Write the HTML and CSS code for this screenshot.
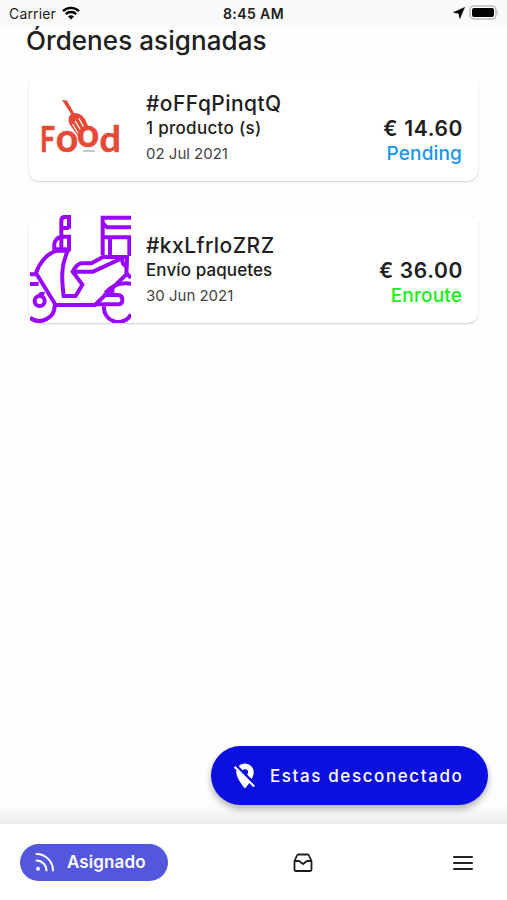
FILE: index.html
```html
<!DOCTYPE html>
<html lang="es">
  <head>
    <meta charset="UTF-8" />
    <meta name="viewport" content="width=device-width, initial-scale=1.0" />
    <title>Órdenes asignadas</title>
    <link rel="stylesheet" href="styles.css">
  </head>
  <body>
    <div class="app">
      <header class="status">
        <div class="carrier">
          <span>Carrier</span>
          <svg width="18" height="14" viewBox="0 0 18 14" fill="none" stroke="#000" stroke-width="2.4">
            <path d="M1 5.2a11.3 11.3 0 0 1 16 0" />
            <path d="M3.8 8.2a7.4 7.4 0 0 1 10.4 0" />
            <path d="M9 13.6L6 10.6a4.3 4.3 0 0 1 6 0z" fill="#000" stroke="none" />
          </svg>
        </div>
        <span class="time">8:45 AM</span>
        <div class="battery">
          <svg width="12" height="12" viewBox="0 0 12 12"><path d="M11.5 .5L6.8 11.5 5.8 6.3.5 5.4z" stroke="#000" stroke-width=".6" /></svg>
          <svg width="31" height="16" viewBox="0 0 31 16">
            <rect x="1" y="1" width="26" height="13" rx="4" fill="#fff" stroke="#bbb" stroke-width="1.5" />
            <rect x="3" y="3" width="22" height="9" rx="2" />
            <path d="M28.4 5.5q2 2 0 4z" fill="#bbb" />
          </svg>
        </div>
      </header>

      <main class="content">
        <h1>Órdenes asignadas</h1>

        <article class="card">
          <svg class="thumb" viewBox="0 0 101 108" fill="#e64a37">
            <path d="M32 27l5 .5L44 40c6 0 9 3 11 6l4 9-11 8-8-11c-2-4-2-8 1-11z" />
            <path d="M45 48l7 11M49 45.500l6 11M42.500 51l6 10" fill="none" stroke="#fff" stroke-width="1.300" />
            <g class="logo-text">
              <text x="10" y="79" font-size="37" textLength="15" lengthAdjust="spacingAndGlyphs">F</text>
              <text x="25.7" y="79" font-size="40" textLength="22.5" lengthAdjust="spacingAndGlyphs">o</text>
              <text x="46.7" y="73.5" font-size="40" textLength="22.5" lengthAdjust="spacingAndGlyphs">o</text>
              <text x="69.5" y="79" font-size="37" textLength="21.5" lengthAdjust="spacingAndGlyphs">d</text>
            </g>
            <path d="M53 78h12" stroke="#b5b5b5" stroke-width="1.500" />
          </svg>
          <div class="info">
            <h2>#oFFqPinqtQ</h2>
            <p class="detail detail-short">1 producto (s)</p>
            <p class="date">02 Jul 2021</p>
          </div>
          <div class="amount">
            <p class="price">€ 14.60</p>
            <p class="state pending">Pending</p>
          </div>
        </article>

        <article class="card">
          <svg class="thumb" viewBox="30 30 303 324" fill="none" stroke="#9807fa" stroke-width="12">
            <!-- handlebar and headlight -->
            <path d="M147 71V36h-13q-10 0-10 11v43M124 69h23M124 95h23v38h-44v-17q4-18 21-21v38" />
            <!-- front fender and leg shield -->
            <path d="M48 204c10-30 32-58 62-67h34c-22 42-19 88-13 136h36l20-34-29-39c8-14 14-24 27-25h29l35-19h78M164 200h55l82-38M48 204l59 96h118l94-92 2-47" />
            <path d="M30 208h18M30 237h26M319 204l14 15M256 264q30-36 77-28" />
            <!-- box -->
            <path d="M333 38h-85v112M248 54l13 13h72M248 97h85M270 97v56M328 97v56M307 157v12q2 14 18 18" />
            <!-- wheels -->
            <path d="M104 300a46 46 0 0 1-74 38M252 304a43 43 0 0 0 81 24" />
            <circle cx="59" cy="288" r="15" />
            <path d="M59 270q4-6 14-3M250 270h43q14 0 14 14t-14 14h-68M277 250v20" />
          </svg>
          <div class="info">
            <h2>#kxLfrloZRZ</h2>
            <p class="detail">Envío paquetes</p>
            <p class="date">30 Jun 2021</p>
          </div>
          <div class="amount">
            <p class="price">€ 36.00</p>
            <p class="state enroute">Enroute</p>
          </div>
        </article>
      </main>

      <div class="action">
        <button class="connect">
          <svg width="30" height="30" viewBox="0 0 24 24" fill="#fff">
            <path d="M12 6.500A2.500 2.500 0 0 1 14.500 9c0 .74-.33 1.390-.83 1.850l3.630 3.630c.98-1.860 1.700-3.800 1.700-5.480a7 7 0 0 0-7-7c-1.980 0-3.760.83-5.040 2.150l3.190 3.190c.46-.52 1.110-.84 1.850-.84zM16.370 16.100L4.270 4l-1.270 1.270 2.180 2.180C5.060 7.950 5 8.470 5 9c0 5.250 7 13 7 13s1.670-1.850 3.380-4.350L18.730 21 20 19.730z" />
          </svg>
          <span>Estas desconectado</span>
        </button>
      </div>

      <nav class="tabs">
        <a class="tab-active" href="#">
          <svg width="20" height="20" viewBox="0 0 20 20" fill="none" stroke="#fff" stroke-width="2" stroke-linecap="round">
            <path d="M1.500 2A16.500 16.500 0 0 1 18 18.500M1.500 8.500a10 10 0 0 1 10 10" />
            <circle cx="3" cy="16.700" r="2" fill="#fff" stroke="none" />
          </svg>
          <span>Asignado</span>
        </a>
        <a class="tab-orders" href="#">
          <svg width="20" height="20" viewBox="0 0 20 20" fill="none" stroke="#1c1c1c" stroke-width="1.800" stroke-linejoin="round">
            <path d="M1.500 8L4 2.500Q4.300 1.500 5.500 1.500h9Q15.700 1.500 16 2.500L18.500 8v8.500q0 1.500-1.500 1.500H3q-1.500 0-1.500-1.500zM1.500 8H6L10 11 14 8h4.500" />
          </svg>
        </a>
        <a class="tab-menu" href="#">
          <svg width="20" height="16" viewBox="0 0 20 16" stroke="#222" stroke-width="2" stroke-linecap="round">
            <path d="M1 2h18M1 8h18M1 14h18" />
          </svg>
        </a>
      </nav>
    </div>
  </body>
</html>
```
FILE: styles.css
```css
* {
  margin: 0;
  padding: 0;
  box-sizing: border-box;
}
body {
  font-family: Inter, "Liberation Sans", sans-serif;
  color: #202020;
  background: #fefefe;
}
a {
  color: inherit;
  text-decoration: none;
}
.app {
  height: 900px;
  display: flex;
  flex-direction: column;
  overflow: hidden;
}
.status {
  height: 26px;
  padding: 0 7px 0 9px;
  display: grid;
  grid-template-columns: 1fr auto 1fr;
  align-items: center;
  background: #fafafa;
  font-size: 14px;
}
.carrier {
  display: flex;
  align-items: center;
  gap: 6px;
  letter-spacing: 0.15px;
}
.time {
  margin-right: 2px;
  font-weight: 600;
  letter-spacing: 0.4px;
}
.battery {
  display: flex;
  align-items: center;
  justify-content: flex-end;
  gap: 4px;
}
.content {
  flex: 1;
  padding: 0 29px;
}
h1 {
  height: 48px;
  margin-left: -3px;
  font-size: 26px;
  line-height: 29px;
  font-weight: 500;
  letter-spacing: 0.07px;
}
.card {
  height: 107px;
  margin-bottom: 35px;
  padding-right: 16px;
  display: flex;
  border-radius: 10px;
  background: #fff;
  box-shadow: 0 1px 2px rgba(0, 0, 0, 0.2);
}
.thumb {
  width: 101px;
  height: 108px;
  margin: -1px 0 0 1px;
}
.logo-text {
  font-family: Lato, sans-serif;
  font-weight: 700;
  stroke: #e64a37;
  stroke-width: 0.5px;
}
.info {
  margin-left: 15px;
  padding-top: 16px;
}
h2 {
  font-size: 21px;
  line-height: 27px;
  font-weight: 500;
  letter-spacing: 0.45px;
}
.detail {
  font-size: 17px;
  line-height: 23px;
  font-weight: 500;
  letter-spacing: 0.1px;
}
.detail-short {
  letter-spacing: 0.3px;
}
.date {
  margin-top: 2px;
  font-size: 15px;
  line-height: 23px;
  color: #444;
}
.amount {
  margin-left: auto;
  padding-top: 43px;
  text-align: right;
}
.price {
  margin-right: -1px;
  font-size: 21px;
  line-height: 24px;
  font-weight: 600;
  letter-spacing: 0.65px;
}
.state {
  font-size: 19px;
  line-height: 25px;
  font-weight: 500;
  letter-spacing: 0.15px;
}
.pending {
  color: #1595f3;
}
.enroute {
  color: #18f018;
}
.action {
  padding: 0 19px 19px;
  display: flex;
  justify-content: flex-end;
  background: linear-gradient(transparent 75%, #ededed);
}
.connect {
  width: 277px;
  height: 59px;
  padding-left: 19px;
  display: flex;
  align-items: center;
  gap: 10px;
  border: none;
  border-radius: 30px;
  background: #0b0fe0;
  box-shadow: 0 4px 7px rgba(0, 0, 0, 0.3);
  color: #fff;
  font: 500 17px Inter, sans-serif;
  letter-spacing: 1.6px;
}
.tabs {
  height: 76px;
  padding: 2px 34px 0 20px;
  display: grid;
  grid-template-columns: 148px 1fr 20px;
  align-items: center;
  background: #fff;
}
.tab-active {
  height: 37px;
  margin-bottom: 2px;
  padding-left: 15px;
  display: flex;
  align-items: center;
  gap: 12px;
  border-radius: 19px;
  background: #5357dc;
  color: #fff;
  font-size: 17px;
  font-weight: 600;
  letter-spacing: 0.1px;
}
.tab-orders {
  height: 20px;
  padding-left: 125px;
}
.tab-menu {
  height: 16px;
}
```
